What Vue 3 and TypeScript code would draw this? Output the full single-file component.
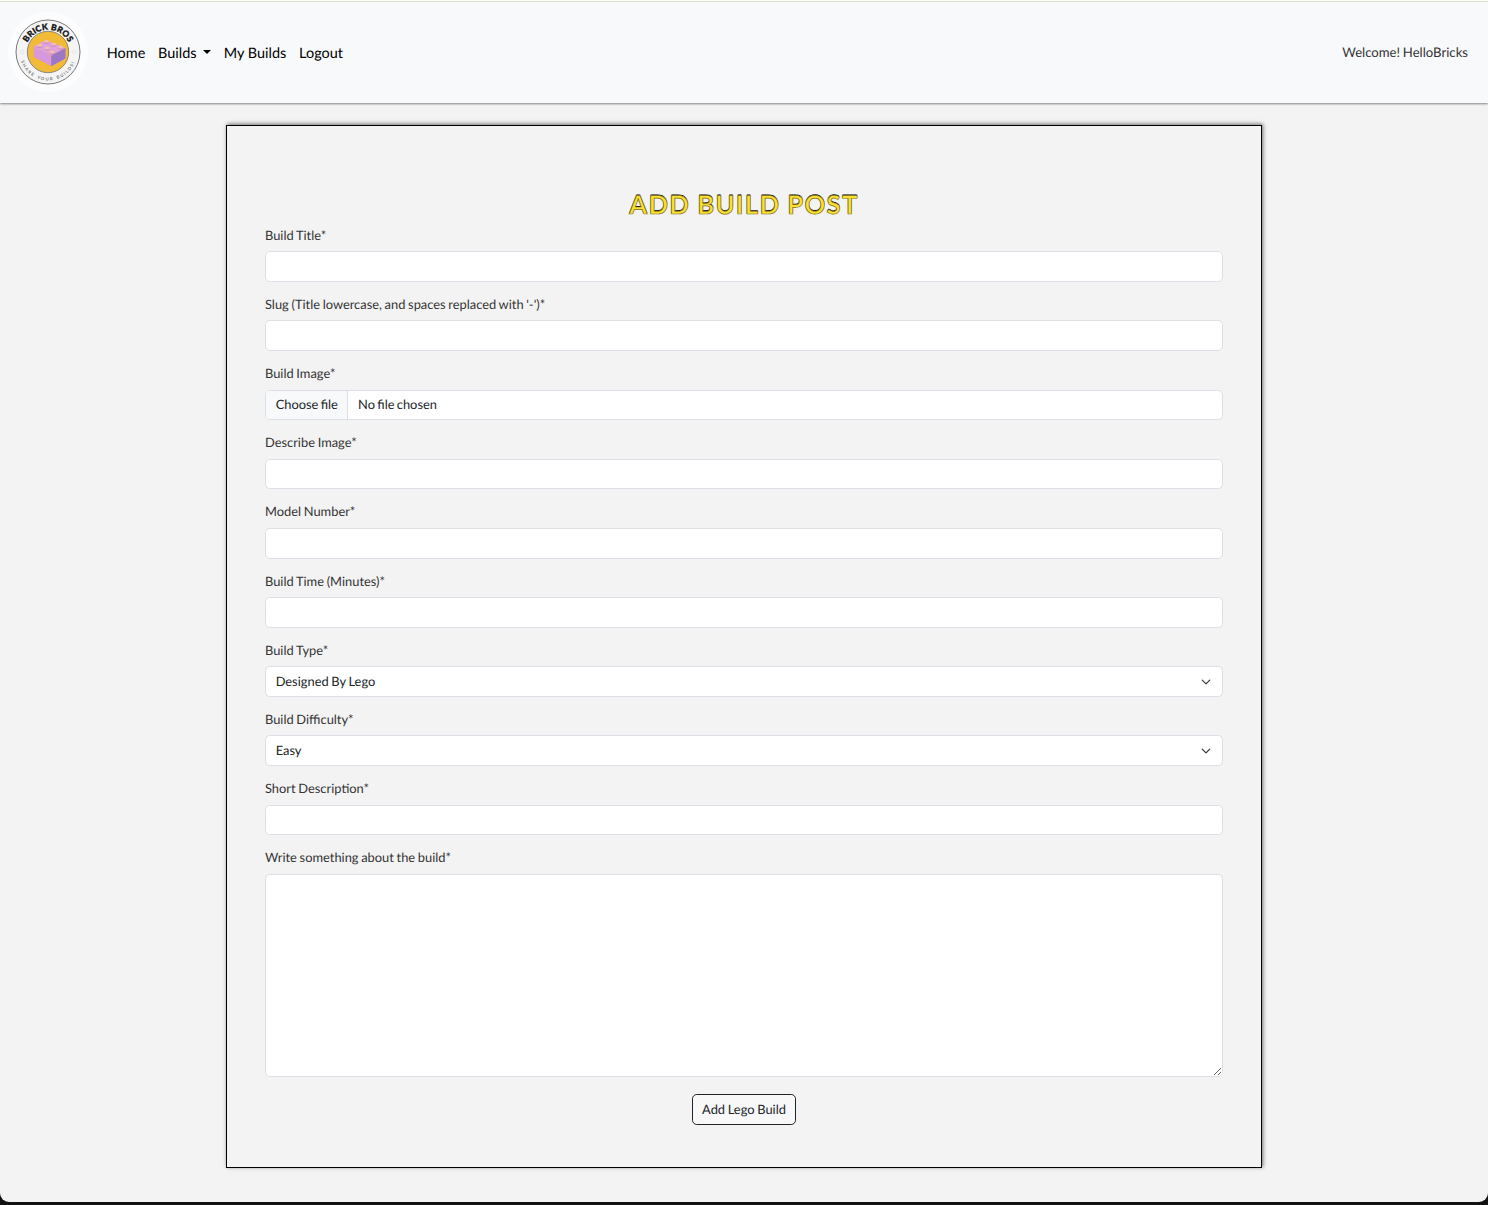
<script setup lang="ts">
import { ref } from 'vue'

interface Field {
  id: string
  label: string
  kind: 'text' | 'file' | 'select' | 'textarea'
  options?: string[]
}

const fields: Field[] = [
  { id: 'title', label: 'Build Title*', kind: 'text' },
  { id: 'slug', label: "Slug (Title lowercase, and spaces replaced with '-')*", kind: 'text' },
  { id: 'image', label: 'Build Image*', kind: 'file' },
  { id: 'alt', label: 'Describe Image*', kind: 'text' },
  { id: 'model', label: 'Model Number*', kind: 'text' },
  { id: 'time', label: 'Build Time (Minutes)*', kind: 'text' },
  { id: 'type', label: 'Build Type*', kind: 'select', options: ['Designed By Lego'] },
  { id: 'difficulty', label: 'Build Difficulty*', kind: 'select', options: ['Easy'] },
  { id: 'short', label: 'Short Description*', kind: 'text' },
  { id: 'content', label: 'Write something about the build*', kind: 'textarea' },
]

const values = ref<Record<string, string>>({ type: 'Designed By Lego', difficulty: 'Easy' })

const studs = [
  [46.3, 40.6], [54, 43.2], [61, 46.2], [39.8, 44.6], [47.2, 47.2], [52, 51.2],
]
</script>

<template>
  <div class="window">
    <div class="page">
      <header class="navbar">
        <svg class="logo" viewBox="0 0 80 80" aria-label="Brick Bros">
          <defs>
            <path id="arc-top" d="M17.1 40.6a22.9 22.9 0 0 1 45.8 0" />
            <path id="arc-bottom" d="M11.4 40a28.6 28.6 0 0 0 57.2 0" />
          </defs>
          <circle cx="40" cy="40" r="40" fill="#fdfdfe" />
          <circle cx="40" cy="40" r="32" fill="#f4f4f5" stroke="#555" stroke-width=".8" />
          <circle cx="40" cy="40" r="20.7" fill="#f1bb37" stroke="#77736a" stroke-width=".8" />
          <text class="brand-top"><textPath href="#arc-top" startOffset="50%" text-anchor="middle">BRICK BROS</textPath></text>
          <text class="brand-bottom"><textPath href="#arc-bottom" startOffset="50%" text-anchor="middle">SHARE YOUR BUILDS!</textPath></text>
          <circle cx="14.3" cy="40" r="1.8" fill="none" stroke="#e2e3e5" stroke-width=".8" />
          <circle cx="66.2" cy="40" r="1.8" fill="none" stroke="#e2e3e5" stroke-width=".8" />
          <g transform="translate(-8 -12)">
            <path d="M33.5 46.5 45 40.3 65.5 48 51.2 55.5Z" fill="#dfa2de" />
            <path d="M33.5 46.5 51.2 55.5V66.3L33.5 57Z" fill="#d898dc" />
            <path d="M51.2 55.5 65.5 48V58.4L51.2 66.3Z" fill="#9c77c5" />
            <g v-for="(s, i) in studs" :key="i">
              <ellipse :cx="s[0]" :cy="s[1] + 1.8" rx="2.7" ry="1.6" fill="#c988c6" />
              <ellipse :cx="s[0]" :cy="s[1] + 0.7" rx="2.7" ry="1.5" fill="#f0c0ac" />
            </g>
          </g>
        </svg>
        <nav class="links">
          <a>Home</a>
          <a>Builds<i class="caret"></i></a>
          <a>My Builds</a>
          <a>Logout</a>
        </nav>
        <span class="welcome">Welcome! HelloBricks</span>
      </header>

      <main class="card">
        <h1>ADD BUILD POST</h1>
        <form @submit.prevent>
          <div v-for="f in fields" :key="f.id" class="field">
            <label :for="f.id">{{ f.label }}</label>
            <div v-if="f.kind === 'file'" class="control file">
              <span class="choose">Choose file</span>
              <span class="chosen">No file chosen</span>
            </div>
            <div v-else-if="f.kind === 'select'" class="select-wrap">
              <select :id="f.id" v-model="values[f.id]" class="control">
                <option v-for="o in f.options" :key="o">{{ o }}</option>
              </select>
              <svg class="chevron" viewBox="0 0 16 16"><path d="m2 5 6 6 6-6" /></svg>
            </div>
            <textarea v-else-if="f.kind === 'textarea'" :id="f.id" v-model="values[f.id]" class="control area"></textarea>
            <input v-else :id="f.id" v-model="values[f.id]" type="text" class="control" />
          </div>
          <button type="submit">Add Lego Build</button>
        </form>
      </main>
    </div>
  </div>
</template>

<style>
body {
  margin: 0;
  background: #111;
}
</style>

<style scoped>
* {
  box-sizing: border-box;
}
.window {
  height: 1205px;
  background: #111;
  font-family: Lato, "Liberation Sans", sans-serif;
  font-size: 12.87px;
  line-height: 19.3px;
  word-spacing: -0.6px;
  color: #333;
  text-rendering: geometricPrecision;
  overflow: hidden;
}
.page {
  height: 1202px;
  background: #f3f3f3;
  border-radius: 0 0 9px 9px;
  overflow: hidden;
}
.navbar {
  display: flex;
  align-items: center;
  height: 103px;
  padding: 0 20px 0 8px;
  border-top: 1px solid #fbfdf6;
  background: linear-gradient(#dce3cc 0 1px, #f8f9fb 1px);
  box-shadow: 0 1px 2px rgba(0, 0, 0, 0.45);
}
.logo {
  width: 80px;
  height: 80px;
  flex: none;
}
.brand-top {
  font: 900 8.4px Lato, sans-serif;
  letter-spacing: 0.1px;
  word-spacing: 0.6px;
  fill: #111;
  stroke: #111;
  stroke-width: 0.3px;
}
.brand-bottom {
  font: 700 4.3px Lato, sans-serif;
  letter-spacing: 1.35px;
  word-spacing: 1px;
  fill: #777;
}
.links {
  display: flex;
  gap: 12.8px;
  margin-left: 18.8px;
  padding-top: 3px;
  font-size: 14.45px;
  word-spacing: 0;
  color: #000;
}
.caret {
  display: inline-block;
  margin-left: 6.5px;
  vertical-align: 3.5px;
  border: 4px solid transparent;
  border-top-color: #000;
  border-bottom: 0;
}
.welcome {
  margin-left: auto;
  padding-top: 2px;
  font-size: 13.15px;
}
.card {
  width: 1036px;
  height: 1043px;
  margin: 22px auto 0;
  padding: 64px 38px 0;
  border: 1px solid #000;
  box-shadow: 1px -1px 4px rgba(0, 0, 0, 0.55);
}
h1 {
  margin: 0;
  height: 35.6px;
  line-height: 30px;
  font-size: 25.7px;
  font-weight: 700;
  letter-spacing: 1.33px;
  text-align: center;
  color: #fbe032;
  -webkit-text-stroke: 0.7px #7d7020;
  text-shadow: 0 -0.6px 0 #000;
}
.field {
  margin-bottom: 12.87px;
}
label {
  display: block;
  padding-top: 0.15px;
  margin-bottom: 6.3px;
}
.control {
  display: block;
  width: 100%;
  height: 30.57px;
  margin: 0;
  padding: 0 9.65px;
  border: 1px solid #dce0e6;
  border-radius: 4.8px;
  background: #fff;
  font: inherit;
  word-spacing: inherit;
  color: #212529;
  text-rendering: inherit;
  appearance: none;
  outline: none;
}
.file {
  display: flex;
  align-items: stretch;
  padding: 0;
  line-height: 27.5px;
  word-spacing: -1px;
  overflow: hidden;
}
.choose {
  padding: 0 9.65px;
  border-right: 1px solid #dce0e6;
  background: #f8f9fa;
}
.chosen {
  padding-left: 9.65px;
}
.select-wrap {
  position: relative;
}
.chevron {
  position: absolute;
  right: 11.7px;
  top: 10.6px;
  width: 10px;
  height: 10px;
  fill: none;
  stroke: #343a40;
  stroke-width: 2;
  stroke-linecap: round;
  stroke-linejoin: round;
}
.area {
  height: 203px;
  resize: vertical;
}
button {
  display: block;
  height: 31px;
  margin: 17px auto 0;
  padding: 1px 9px 0;
  border: 1px solid #212529;
  border-radius: 4.8px;
  background: #f8f8f9;
  font: inherit;
  word-spacing: inherit;
  color: #212529;
  text-rendering: inherit;
}
</style>
